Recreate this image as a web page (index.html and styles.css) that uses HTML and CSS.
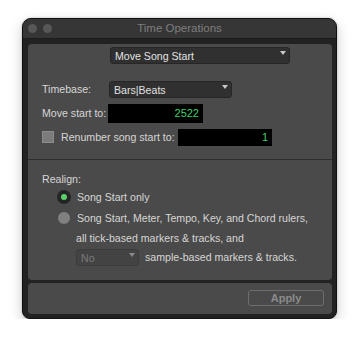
FILE: index.html
```html
<!DOCTYPE html>
<html lang="en">
<head>
    <meta charset="UTF-8">
    <meta name="viewport" content="width=device-width, initial-scale=1.0">
    <title>Time Operations</title>
    <link rel="stylesheet" href="styles.css">
</head>
<body>
    <div class="window">
        <div class="titlebar">
            <span class="light"></span>
            <span class="light"></span>
            <span class="title">Time Operations</span>
        </div>

        <div class="panel main">
            <div class="section top">
                <div class="select mode">Move Song Start<span class="arrow"></span></div>

                <div class="row timebase">
                    <span class="label">Timebase:</span>
                    <div class="select tb">Bars|Beats<span class="arrow"></span></div>
                </div>

                <div class="row move">
                    <span class="label">Move start to:</span>
                    <div class="field move-field">2522</div>
                </div>

                <div class="row renumber">
                    <span class="checkbox"></span>
                    <span class="check-label">Renumber song start to:</span>
                    <div class="field renum-field">1</div>
                </div>
            </div>

            <div class="section bottom">
                <div class="realign">Realign:</div>
                <div class="radio-row first">
                    <span class="radio on"></span>
                    <span>Song Start only</span>
                </div>
                <div class="radio-row second">
                    <span class="radio off"></span>
                    <span>Song Start, Meter, Tempo, Key, and Chord rulers,</span>
                </div>
                <div class="line">all tick-based markers &amp; tracks, and</div>
                <div class="line sample">
                    <div class="select no">No<span class="arrow"></span></div>
                    <span>sample-based markers &amp; tracks.</span>
                </div>
            </div>
        </div>

        <div class="panel footer">
            <button class="apply">Apply</button>
        </div>
    </div>
</body>
</html>
```

FILE: styles.css
```css
body {
    margin: 0;
    padding: 18px 23px 0 22px;
    background: #ffffff;
    font-family: "Liberation Sans", Arial, sans-serif;
    font-size: 10.6px;
    color: #d6d6d6;
}
.window {
    width: 315px;
    height: 301px;
    box-sizing: border-box;
    background: #222222;
    border: 1px solid #111;
    border-radius: 9px 9px 8px 8px;
    box-shadow: 0 5px 14px rgba(0,0,0,0.2), 0 0 2px rgba(0,0,0,0.3);
    padding: 0 4px 4px 5px;
    display: flex;
    flex-direction: column;
    overflow: hidden;
}
.titlebar {
    height: 19px;
    margin: 0 -4px 5px -5px;
    background: #363636;
    border-bottom: 1px solid #1b1b1b;
    display: flex;
    align-items: center;
    padding-left: 5px;
    gap: 6px;
    position: relative;
}
.light {
    width: 9px;
    height: 9px;
    border-radius: 50%;
    background: #575757;
}
.title {
    position: absolute;
    left: 0;
    right: 0;
    text-align: center;
    font-size: 11.5px;
    color: #7e7e7e;
}
.panel {
    background: #4a4a4a;
    border-radius: 4px;
}
.main {
    height: 237px;
    display: flex;
    flex-direction: column;
}
.section.top {
    padding: 3px 0 0 14px;
    height: 116px;
    box-sizing: border-box;
    border-bottom: 1px solid #2e2e2e;
}
.select {
    position: relative;
    box-sizing: border-box;
    height: 17px;
    line-height: 17px;
    background: #303030;
    border: 1px solid #262626;
    border-radius: 3px;
    padding-left: 4px;
    color: #e2e2e2;
}
.arrow {
    position: absolute;
    right: 3px;
    top: 3px;
    width: 0;
    height: 0;
    border-left: 3.5px solid transparent;
    border-right: 3.5px solid transparent;
    border-top: 4px solid #c8c8c8;
}
.mode {
    width: 180px;
    margin-left: 68px;
}
.row {
    display: flex;
    align-items: center;
}
.label {
    width: 67px;
}
.timebase {
    margin-top: 17px;
}
.tb {
    width: 123px;
}
.move {
    margin-top: 6px;
}
.field {
    box-sizing: border-box;
    background: #000;
    color: #3fd06f;
    text-align: right;
    padding-right: 4px;
    font-size: 11px;
}
.move-field {
    width: 95px;
    height: 19px;
    line-height: 19px;
    margin-left: -1px;
}
.renumber {
    margin-top: 6px;
}
.checkbox {
    width: 12px;
    height: 12px;
    box-sizing: border-box;
    background: #7b7b7b;
    border: 1px solid #8c8c8c;
}
.check-label {
    margin-left: 7px;
    width: 117px;
}
.renum-field {
    width: 94px;
    height: 17px;
    line-height: 17px;
}
.section.bottom {
    padding: 12px 0 0 14px;
}
.realign {
    line-height: 14px;
}
.radio-row {
    display: flex;
    align-items: center;
    height: 14px;
    margin-left: 15px;
    gap: 6px;
}
.radio-row.first {
    margin-top: 4px;
}
.radio-row.second {
    margin-top: 7px;
}
.radio {
    box-sizing: border-box;
    border-radius: 50%;
}
.radio.on {
    width: 14px;
    height: 14px;
    background: #5ad06a;
    border: 4px solid #242424;
}
.radio.off {
    width: 12px;
    height: 12px;
    margin: 0 1px;
    background: #808080;
}
.line {
    margin-left: 34px;
    line-height: 14px;
}
.line:not(.sample) {
    margin-top: 6px;
}
.sample {
    display: flex;
    align-items: center;
    gap: 6px;
    margin-top: 4px;
}
.no {
    width: 63px;
    background: #434343;
    border-color: #3c3c3c;
    color: #7a7a7a;
}
.no .arrow {
    border-top-color: #8a8a8a;
}
.footer {
    margin-top: 3px;
    height: 31px;
    display: flex;
    justify-content: flex-end;
    align-items: flex-start;
    padding: 7px 8px 0 0;
    box-sizing: border-box;
}
.apply {
    width: 76px;
    height: 16px;
    background: transparent;
    border: 1px solid #6e6e6e;
    border-radius: 3px;
    color: #8a8a8a;
    font-family: "Liberation Sans", Arial, sans-serif;
    font-size: 11px;
    font-weight: bold;
    padding: 0;
}
```
